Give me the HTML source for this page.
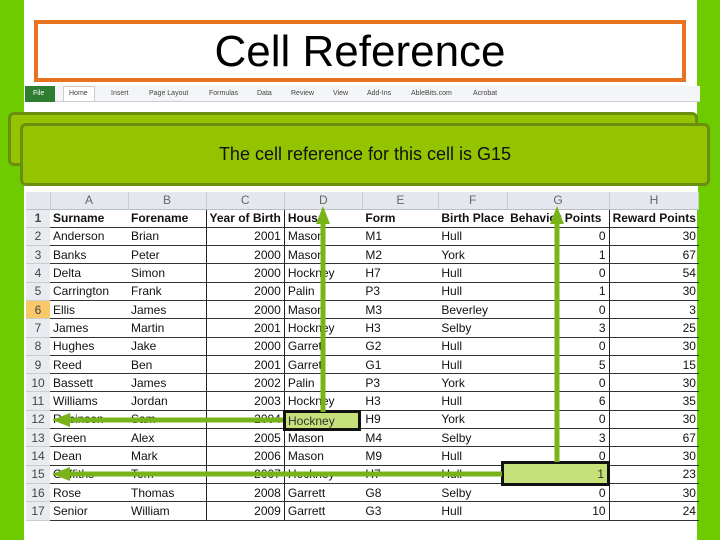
<!DOCTYPE html><html><head><style>
*{margin:0;padding:0;box-sizing:border-box}
body{width:720px;height:540px;background:#6ecb00;position:relative;overflow:hidden;font-family:"Liberation Sans",sans-serif}
.abs{position:absolute}
#panel{left:24px;top:0;width:673px;height:540px;background:#fff}
#title{left:34px;top:20px;width:652px;height:62px;border:4px solid #e8731f;font-size:44px;text-align:center;line-height:56px;color:#000;transform-origin:center;}
#ribbon{left:25px;top:86px;width:675px;height:16px;background:#f3f5f7;border-bottom:1px solid #ccd;font-size:7px;color:#444}
#ribbon span{position:absolute;top:4px}
.gbox{background:#94c400;border:3px solid #6a8f10;border-radius:6px}
table{position:absolute;left:26px;top:192px;border-collapse:collapse;font-size:12px;color:#111}
td{height:18.3px;padding:0 3px;border-bottom:1px solid #333;white-space:nowrap;overflow:hidden}
tr.h td{background:#e4e8ee;color:#666;text-align:center;border-bottom:1px solid #b8bec8;height:17px;border-right:1px solid #c8ccd4}
td.n{background:#e8ebef;color:#444;text-align:center;border-bottom:1px solid #ccc}
td.r{text-align:right}
tr.b td{font-weight:bold}
.bl{border-left:1px solid #222}
</style></head><body>
<div id="panel" class="abs"></div>
<div id="title" class="abs">Cell Reference</div>
<div id="ribbon" class="abs">
<span style="left:0;top:0;width:30px;height:16px;background:#2e7d32;color:#fff;padding:4px 8px">File</span>
<span style="left:38px;top:0;height:16px;width:32px;background:#fff;border:1px solid #ccc;padding:3px 5px">Home</span>
<span style="left:86px">Insert</span><span style="left:124px">Page Layout</span><span style="left:184px">Formulas</span><span style="left:232px">Data</span><span style="left:266px">Review</span><span style="left:308px">View</span><span style="left:342px">Add-Ins</span><span style="left:386px">AbleBits.com</span><span style="left:448px">Acrobat</span>
</div>
<div class="abs gbox" style="left:8px;top:112px;width:690px;height:54px"></div>
<div class="abs gbox" style="left:20px;top:123px;width:690px;height:63px;font-size:18px;color:#111;text-align:center;line-height:57px">The cell reference for this cell is G15</div>
<div class="abs" style="left:26px;top:186px;width:672px;height:6px;background:#fff"></div>
<table>
<colgroup><col style="width:24px"><col style="width:78px"><col style="width:78px"><col style="width:78px"><col style="width:78px"><col style="width:76px"><col style="width:68px"><col style="width:102px"><col style="width:89px"></colgroup>
<tr class="h"><td></td><td>A</td><td>B</td><td>C</td><td>D</td><td>E</td><td>F</td><td>G</td><td>H</td></tr>
<tr class="b"><td class="n" style="font-weight:bold">1</td><td>Surname</td><td>Forename</td><td class="bl">Year of Birth</td><td class="bl">House</td><td>Form</td><td>Birth Place</td><td>Behavior Points</td><td class="bl">Reward Points</td></tr>
<tr><td class="n">2</td><td>Anderson</td><td>Brian</td><td class="r bl">2001</td><td class="bl">Mason</td><td>M1</td><td>Hull</td><td class="r">0</td><td class="r bl">30</td></tr>
<tr><td class="n">3</td><td>Banks</td><td>Peter</td><td class="r bl">2000</td><td class="bl">Mason</td><td>M2</td><td>York</td><td class="r">1</td><td class="r bl">67</td></tr>
<tr><td class="n">4</td><td>Delta</td><td>Simon</td><td class="r bl">2000</td><td class="bl">Hockney</td><td>H7</td><td>Hull</td><td class="r">0</td><td class="r bl">54</td></tr>
<tr><td class="n">5</td><td>Carrington</td><td>Frank</td><td class="r bl">2000</td><td class="bl">Palin</td><td>P3</td><td>Hull</td><td class="r">1</td><td class="r bl">30</td></tr>
<tr><td class="n" style="background:#f7c968">6</td><td>Ellis</td><td>James</td><td class="r bl">2000</td><td class="bl">Mason</td><td>M3</td><td>Beverley</td><td class="r">0</td><td class="r bl">3</td></tr>
<tr><td class="n">7</td><td>James</td><td>Martin</td><td class="r bl">2001</td><td class="bl">Hockney</td><td>H3</td><td>Selby</td><td class="r">3</td><td class="r bl">25</td></tr>
<tr><td class="n">8</td><td>Hughes</td><td>Jake</td><td class="r bl">2000</td><td class="bl">Garrett</td><td>G2</td><td>Hull</td><td class="r">0</td><td class="r bl">30</td></tr>
<tr><td class="n">9</td><td>Reed</td><td>Ben</td><td class="r bl">2001</td><td class="bl">Garrett</td><td>G1</td><td>Hull</td><td class="r">5</td><td class="r bl">15</td></tr>
<tr><td class="n">10</td><td>Bassett</td><td>James</td><td class="r bl">2002</td><td class="bl">Palin</td><td>P3</td><td>York</td><td class="r">0</td><td class="r bl">30</td></tr>
<tr><td class="n">11</td><td>Williams</td><td>Jordan</td><td class="r bl">2003</td><td class="bl">Hockney</td><td>H3</td><td>Hull</td><td class="r">6</td><td class="r bl">35</td></tr>
<tr><td class="n">12</td><td>Robinson</td><td>Sam</td><td class="r bl">2004</td><td class="bl">Hockney</td><td>H9</td><td>York</td><td class="r">0</td><td class="r bl">30</td></tr>
<tr><td class="n">13</td><td>Green</td><td>Alex</td><td class="r bl">2005</td><td class="bl">Mason</td><td>M4</td><td>Selby</td><td class="r">3</td><td class="r bl">67</td></tr>
<tr><td class="n">14</td><td>Dean</td><td>Mark</td><td class="r bl">2006</td><td class="bl">Mason</td><td>M9</td><td>Hull</td><td class="r">0</td><td class="r bl">30</td></tr>
<tr><td class="n">15</td><td>Griffiths</td><td>Tom</td><td class="r bl">2007</td><td class="bl">Hockney</td><td>H7</td><td>Hull</td><td class="r">1</td><td class="r bl">23</td></tr>
<tr><td class="n">16</td><td>Rose</td><td>Thomas</td><td class="r bl">2008</td><td class="bl">Garrett</td><td>G8</td><td>Selby</td><td class="r">0</td><td class="r bl">30</td></tr>
<tr><td class="n">17</td><td>Senior</td><td>William</td><td class="r bl">2009</td><td class="bl">Garrett</td><td>G3</td><td>Hull</td><td class="r">10</td><td class="r bl">24</td></tr>
</table>
<div class="abs" style="left:283px;top:410px;width:78px;height:21px;background:#c6e07a;border:3px solid #111;font-size:12px;color:#333;padding:1px 2px">Hockney</div>
<div class="abs" style="left:501px;top:461px;width:109px;height:25px;background:#c6e07a;border:3px solid #111;font-size:12px;color:#333;text-align:right;padding:3px 3px">1</div>
<svg class="abs" style="left:0;top:0" width="720" height="540">
<g stroke="#79b31a" stroke-width="5" fill="#79b31a">
<line x1="323" y1="412" x2="323" y2="222"/><polygon stroke="none" points="316,224 330,224 323,206"/>
<line x1="557" y1="462" x2="557" y2="222"/><polygon stroke="none" points="550,224 564,224 557,206"/>
<line x1="283" y1="420" x2="68" y2="420"/><polygon stroke="none" points="70,413 70,427 52,420"/>
<line x1="502" y1="474" x2="68" y2="474"/><polygon stroke="none" points="70,467 70,481 52,474"/>
</g></svg>
</body></html>
